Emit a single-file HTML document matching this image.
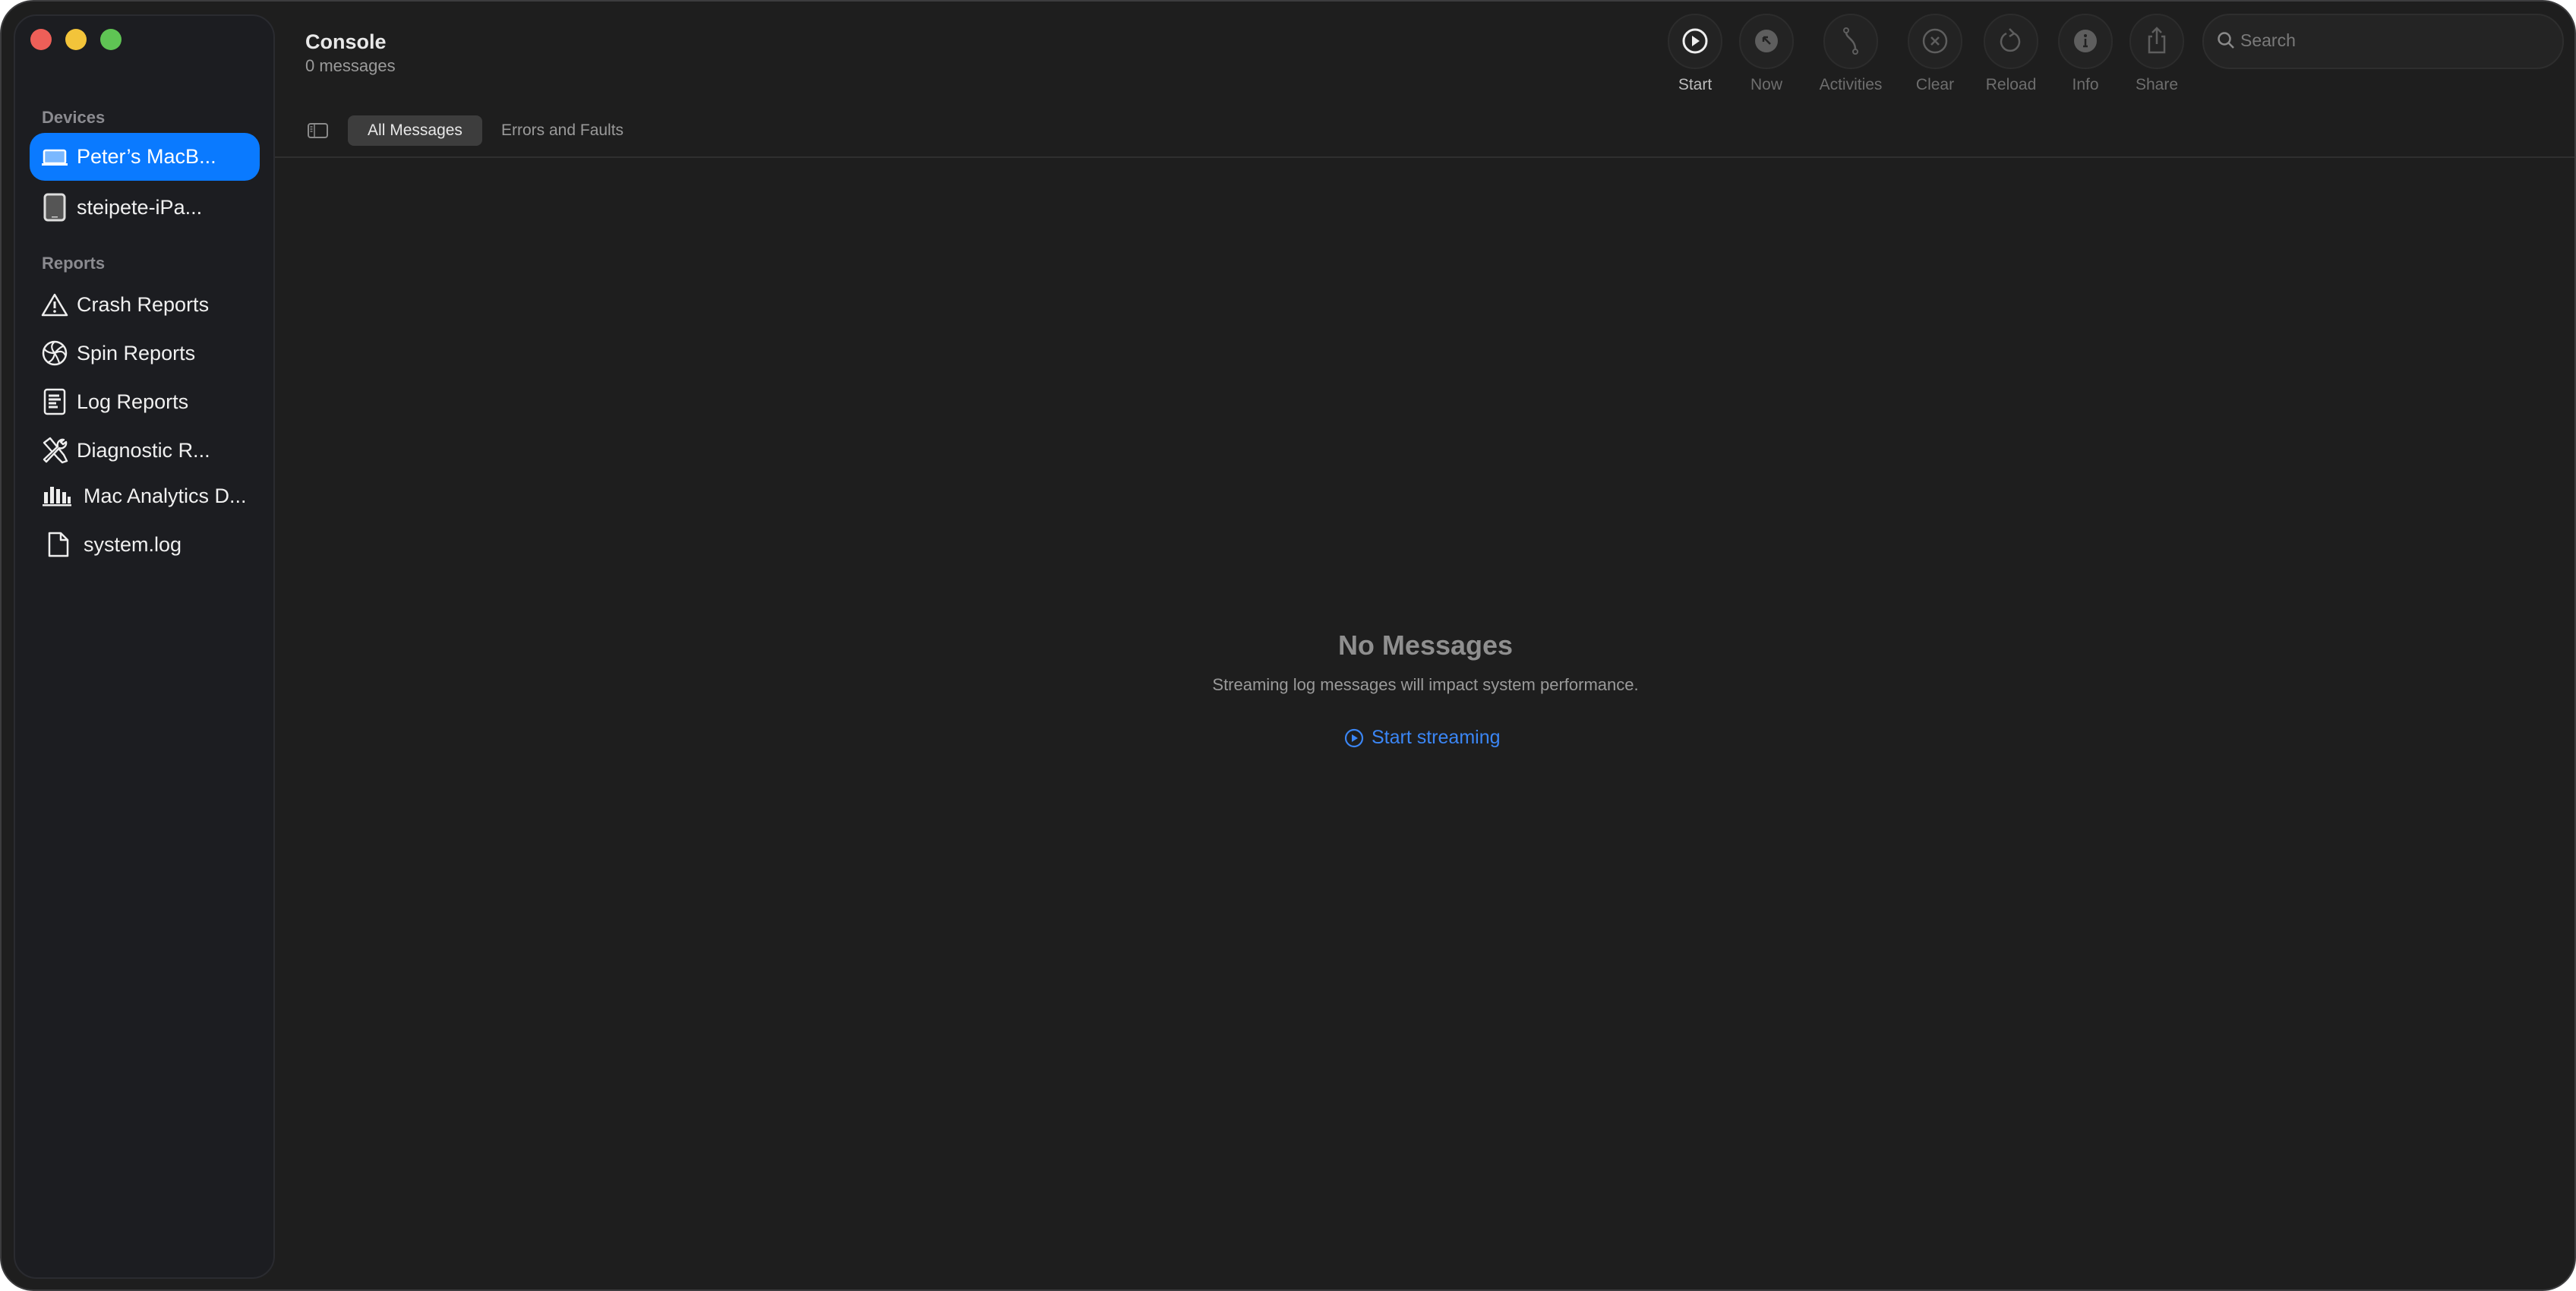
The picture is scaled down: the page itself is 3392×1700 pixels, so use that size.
<!DOCTYPE html>
<html><head><meta charset="utf-8"><style>
*{margin:0;padding:0;box-sizing:border-box}
html,body{width:3392px;height:1700px;background:#fff;overflow:hidden;font-family:"Liberation Sans",sans-serif}
.win{position:absolute;left:0;top:0;width:3392px;height:1700px;background:#1e1e1e;border-radius:44px;border:2px solid #3c3c3e;overflow:hidden}
.side{position:absolute;left:16px;top:17px;width:344px;height:1665px;background:#1c1d21;border:2px solid #2a2b30;border-radius:30px}
.tl{position:absolute;top:36px;width:28px;height:28px;border-radius:50%}
.abs{position:absolute;white-space:nowrap}
.sec{font-size:22px;font-weight:bold;color:#8b8b90;left:53px}
.row{font-size:27px;color:#f0f0f0;left:99px}
.lbl{font-size:21px;color:#6e6e6e;text-align:center;width:120px;top:98px}
.btn{position:absolute;top:16px;width:72px;height:73px;border-radius:36px;background:#232323;border:2px solid #2c2c2c}
.btn svg{position:absolute;left:14px;top:14px}
</style></head><body>
<div class="win">
<div class="side"></div>
<div class="tl" style="left:38px;background:#ee5f58"></div>
<div class="tl" style="left:84px;background:#f3c43a"></div>
<div class="tl" style="left:130px;background:#5fc454"></div>

<div class="abs sec" style="top:140px">Devices</div>
<div class="abs" style="left:37px;top:173px;width:303px;height:63px;border-radius:20px;background:#0a7aff"></div>
<svg class="abs" style="left:52px;top:193px" width="36" height="24" viewBox="0 0 36 24"><rect x="4" y="3" width="28" height="17" rx="2" fill="#7ab8ff" stroke="#fff" stroke-width="2.5"/><rect x="1" y="20" width="34" height="3" fill="#fff"/></svg>
<div class="abs row" style="top:189px;color:#fff">Peter’s MacB...</div>
<svg class="abs" style="left:55px;top:252px" width="30" height="38" viewBox="0 0 30 38"><rect x="2" y="2" width="26" height="34" rx="4" fill="#555" stroke="#ddd" stroke-width="3"/><rect x="11" y="31" width="8" height="1.5" fill="#ccc"/></svg>
<div class="abs row" style="top:256px">steipete-iPa...</div>

<div class="abs sec" style="top:332px">Reports</div>
<svg class="abs" style="left:52px;top:383px" width="36" height="32" viewBox="0 0 36 32"><path d="M18 3 L34 30 H2 Z" fill="none" stroke="#eee" stroke-width="2.5" stroke-linejoin="round"/><path d="M18 12v9" stroke="#eee" stroke-width="3"/><circle cx="18" cy="25" r="1.8" fill="#eee"/></svg>
<div class="abs row" style="top:384px">Crash Reports</div>
<svg class="abs" style="left:52px;top:446px" width="36" height="34" viewBox="0 0 36 34"><circle cx="18" cy="17" r="15" fill="none" stroke="#eee" stroke-width="2.5"/><path d="M18 17 C12 10 14 5 18 2 M18 17 C26 13 30 15 32 20 M18 17 C17 25 12 29 8 29 M18 17 C10 17 6 14 4 11 M18 17 C22 24 24 28 24 31 M18 17 C24 10 28 8 30 8" fill="none" stroke="#eee" stroke-width="2.2"/></svg>
<div class="abs row" style="top:448px">Spin Reports</div>
<svg class="abs" style="left:55px;top:509px" width="30" height="36" viewBox="0 0 30 36"><rect x="2" y="2" width="26" height="32" rx="3" fill="none" stroke="#eee" stroke-width="2.5"/><path d="M7 10h14M7 15h16M7 20h10M7 25h12" stroke="#eee" stroke-width="3"/></svg>
<div class="abs row" style="top:512px">Log Reports</div>
<svg class="abs" style="left:52px;top:573px" width="36" height="36" viewBox="0 0 36 36"><path d="M4 8 L12 2 L30 24 L34 32 L28 34 L22 28 Z" fill="none" stroke="#eee" stroke-width="2.4" stroke-linejoin="round"/><path d="M30 4 a7 7 0 0 0 -8 9 L4 30 l3 3 L24 15 a7 7 0 0 0 9 -8 l-4 3 -3 -3 z" fill="#1c1d21" stroke="#eee" stroke-width="2.4" stroke-linejoin="round"/></svg>
<div class="abs row" style="top:576px">Diagnostic R...</div>
<svg class="abs" style="left:54px;top:634px" width="40" height="32" viewBox="0 0 40 32"><rect x="2" y="12" width="5" height="15" fill="#eee"/><rect x="10" y="5" width="5" height="22" fill="#eee"/><rect x="18" y="8" width="5" height="19" fill="#eee"/><rect x="26" y="12" width="5" height="15" fill="#eee"/><rect x="33" y="18" width="4" height="9" fill="#eee"/><rect x="0" y="28" width="38" height="2.5" fill="#eee"/></svg>
<div class="abs row" style="top:636px;left:108px">Mac Analytics D...</div>
<svg class="abs" style="left:60px;top:697px" width="30" height="36" viewBox="0 0 30 36"><path d="M3 3 H18 L27 12 V33 H3 Z M18 3 V12 H27" fill="none" stroke="#eee" stroke-width="2.5" stroke-linejoin="round"/></svg>
<div class="abs row" style="top:700px;left:108px">system.log</div>

<div class="abs" style="left:400px;top:38px;font-size:27px;font-weight:bold;color:#e8e8e8">Console</div>
<div class="abs" style="left:400px;top:72px;font-size:22px;color:#9a9a9a">0 messages</div>

<svg class="abs" style="left:403px;top:160px" width="27" height="20" viewBox="0 0 27 20"><rect x="1" y="1" width="25" height="18" rx="3" fill="none" stroke="#8a8a8a" stroke-width="2"/><path d="M9 1v18M3.5 5h3M3.5 8h3M3.5 11h3" stroke="#8a8a8a" stroke-width="1.5"/></svg>
<div class="abs" style="left:456px;top:150px;width:177px;height:40px;border-radius:8px;background:#3d3d3d"></div>
<div class="abs" style="left:456px;top:158px;width:177px;text-align:center;font-size:21px;color:#e8e8e8">All Messages</div>
<div class="abs" style="left:658px;top:158px;font-size:21px;color:#9a9a9a">Errors and Faults</div>
<div class="abs" style="left:360px;top:204px;width:3040px;height:2px;background:#2f2f2f"></div>

<div class="btn" style="left:2194px"><svg width="40" height="40" viewBox="0 0 40 40"><circle cx="20" cy="20" r="15" fill="none" stroke="#eee" stroke-width="3"/><path d="M16 13 L26 20 L16 27Z" fill="#eee"/></svg></div>
<div class="btn" style="left:2288px"><svg width="40" height="40" viewBox="0 0 40 40"><circle cx="20" cy="20" r="15" fill="#5e5e5e"/><path d="M16 15 L25 24 M16 15h6M16 15v6" stroke="#222" stroke-width="2.5"/></svg></div>
<div class="btn" style="left:2399px"><svg width="40" height="40" viewBox="0 0 40 40"><circle cx="14" cy="6" r="3" fill="none" stroke="#5e5e5e" stroke-width="2"/><circle cx="26" cy="34" r="3" fill="none" stroke="#5e5e5e" stroke-width="2"/><path d="M14 9 C14 16 26 18 26 31" fill="none" stroke="#5e5e5e" stroke-width="2.5"/></svg></div>
<div class="btn" style="left:2510px"><svg width="40" height="40" viewBox="0 0 40 40"><circle cx="20" cy="20" r="15" fill="none" stroke="#5e5e5e" stroke-width="2.5"/><path d="M15 15l10 10M25 15l-10 10" stroke="#5e5e5e" stroke-width="2.5"/></svg></div>
<div class="btn" style="left:2610px"><svg width="40" height="40" viewBox="0 0 40 40"><path d="M24 10 A12 12 0 1 1 14 10" fill="none" stroke="#5e5e5e" stroke-width="2.5"/><path d="M18 4 L24 10 L18 14" fill="none" stroke="#5e5e5e" stroke-width="2.5"/></svg></div>
<div class="btn" style="left:2708px"><svg width="40" height="40" viewBox="0 0 40 40"><circle cx="20" cy="20" r="15" fill="#5e5e5e"/><circle cx="20" cy="13" r="2" fill="#222"/><path d="M20 17v10M17 27h6" stroke="#222" stroke-width="2.5"/></svg></div>
<div class="btn" style="left:2802px"><svg width="40" height="40" viewBox="0 0 40 40"><path d="M14 14 H10 V35 H30 V14 H26 M20 24 V3 M14 9 L20 3 L26 9" fill="none" stroke="#5e5e5e" stroke-width="2.5"/></svg></div>
<div class="abs lbl" style="left:2170px;color:#bdbdbd">Start</div>
<div class="abs lbl" style="left:2264px">Now</div>
<div class="abs lbl" style="left:2375px">Activities</div>
<div class="abs lbl" style="left:2486px">Clear</div>
<div class="abs lbl" style="left:2586px">Reload</div>
<div class="abs lbl" style="left:2684px">Info</div>
<div class="abs lbl" style="left:2778px">Share</div>

<div class="abs" style="left:2898px;top:16px;width:476px;height:73px;border-radius:36px;background:#242424;border:2px solid #2e2e2e"></div>
<svg class="abs" style="left:2917px;top:39px" width="26" height="26" viewBox="0 0 26 26"><circle cx="10" cy="10" r="7.5" fill="none" stroke="#8a8a8a" stroke-width="2.5"/><path d="M15.5 15.5 L22 22" stroke="#8a8a8a" stroke-width="2.5"/></svg>
<div class="abs" style="left:2948px;top:38px;font-size:23px;color:#7a7a7a">Search</div>

<div class="abs" style="left:1575px;top:827px;width:600px;text-align:center;font-size:36px;font-weight:bold;color:#8f8f8f">No Messages</div>
<div class="abs" style="left:1475px;top:887px;width:800px;text-align:center;font-size:22px;color:#9a9a9a">Streaming log messages will impact system performance.</div>
<svg class="abs" style="left:1768px;top:957px" width="26" height="26" viewBox="0 0 26 26"><circle cx="13" cy="13" r="11" fill="none" stroke="#3b86f5" stroke-width="2.2"/><path d="M10 8 L18 13 L10 18Z" fill="#3b86f5"/></svg>
<div class="abs" style="left:1804px;top:955px;font-size:25px;color:#3b86f5">Start streaming</div>
</div>
</body></html>
